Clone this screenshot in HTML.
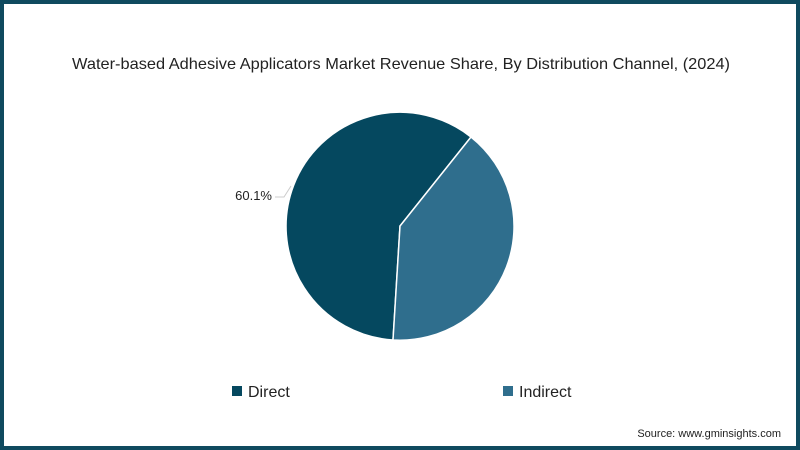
<!DOCTYPE html>
<html><head><style>
body{margin:0;width:800px;height:450px;overflow:hidden;background:#fff;font-family:"Liberation Sans",sans-serif}
.f{position:absolute;left:0;top:0;width:792px;height:442px;border:4px solid #0f4a5f;}
</style></head><body>
<div class="f"></div>
<svg width="800" height="450" style="position:absolute;left:0;top:0">
<text x="72" y="69" textLength="658" lengthAdjust="spacingAndGlyphs" font-family="Liberation Sans,sans-serif" font-size="16" fill="#222">Water-based Adhesive Applicators Market Revenue Share, By Distribution Channel, (2024)</text>
<path d="M400 226 L393 340 A114 114 0 1 1 471 137 Z" fill="#05485f" stroke="#fff" stroke-width="1.5"/>
<path d="M400 226 L471 137 A114 114 0 0 1 393 340 Z" fill="#2f6e8d" stroke="#fff" stroke-width="1.5"/>
<polyline points="275,197 284,197 291,186" fill="none" stroke="#ccc" stroke-width="1"/>
<text x="272" y="200" text-anchor="end" font-size="13" fill="#222">60.1%</text>
<rect x="232" y="386" width="10" height="10" fill="#05485f"/>
<text x="248" y="397" font-size="16" fill="#222">Direct</text>
<rect x="503" y="386" width="10" height="10" fill="#2f6e8d"/>
<text x="519" y="397" font-size="16" fill="#222">Indirect</text>
<text x="781" y="437" text-anchor="end" font-size="11" fill="#222">Source: www.gminsights.com</text>
</svg>
</body></html>
